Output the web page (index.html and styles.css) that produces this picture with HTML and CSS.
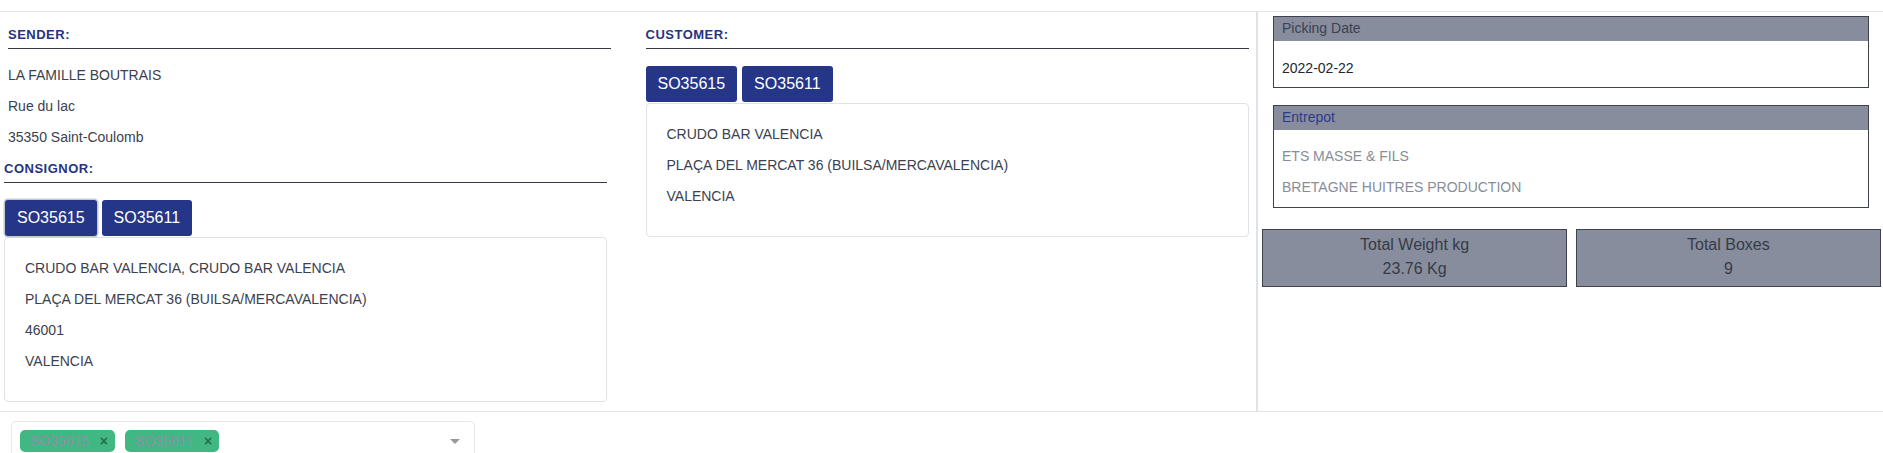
FILE: index.html
```html
<!DOCTYPE html>
<html lang="fr">
<head>
<meta charset="utf-8">
<title>Shipment</title>
<link rel="stylesheet" href="styles.css">
</head>
<body>
<div class="main">
  <div class="left">
    <div class="col col1">
      <div class="sender">
        <h6 class="sec-title">SENDER:</h6>
        <div class="lines">
          <p>LA FAMILLE BOUTRAIS</p>
          <p>Rue du lac</p>
          <p>35350 Saint-Coulomb</p>
        </div>
      </div>
      <h6 class="sec-title">CONSIGNOR:</h6>
      <div class="btns">
        <button class="btn btn-focus">SO35615</button><button class="btn">SO35611</button>
      </div>
      <div class="card">
        <p>CRUDO BAR VALENCIA, CRUDO BAR VALENCIA</p>
        <p>PLAÇA DEL MERCAT 36 (BUILSA/MERCAVALENCIA)</p>
        <p>46001</p>
        <p>VALENCIA</p>
      </div>
    </div>
    <div class="col col2">
      <h6 class="sec-title">CUSTOMER:</h6>
      <div class="btns">
        <button class="btn">SO35615</button><button class="btn">SO35611</button>
      </div>
      <div class="card">
        <p>CRUDO BAR VALENCIA</p>
        <p>PLAÇA DEL MERCAT 36 (BUILSA/MERCAVALENCIA)</p>
        <p>VALENCIA</p>
      </div>
    </div>
  </div>
  <div class="right">
    <div class="box box-date">
      <div class="box-head">Picking Date</div>
      <div class="box-body"><p class="date">2022-02-22</p></div>
    </div>
    <div class="box box-ent">
      <div class="box-head head-blue">Entrepot</div>
      <div class="box-body muted">
        <p>ETS MASSE &amp; FILS</p>
        <p>BRETAGNE HUITRES PRODUCTION</p>
      </div>
    </div>
    <div class="totals">
      <div class="total">
        <div>Total Weight kg</div>
        <div>23.76 Kg</div>
      </div>
      <div class="total">
        <div>Total Boxes</div>
        <div>9</div>
      </div>
    </div>
  </div>
</div>
<div class="multiselect">
  <span class="tag">SO35615<i class="tag-x">×</i></span><span class="tag">SO35611<i class="tag-x">×</i></span>
  <span class="ms-arrow"></span>
</div>
</body>
</html>
```
FILE: styles.css
```css
html, body {
  margin: 0;
  padding: 0;
  background: #ffffff;
}
body {
  padding-top: 11px;
  font-family: "Liberation Sans", Arial, sans-serif;
  font-size: 14px;
  color: #3b4150;
  overflow: hidden;
  height: 442px;
}
p { margin: 0; }

.main {
  display: flex;
  border-top: 1px solid #e3e3e3;
  border-bottom: 1px solid #e3e3e3;
}
.left {
  width: 1256px;
  display: flex;
  flex: none;
}
.col {
  width: 603px;
  flex: none;
  padding-top: 15px;
}
.col1 {
  margin-left: 4px;
  padding-bottom: 9px;
}
.col2 {
  margin-left: 38.5px;
}
.sender {
  margin-left: 4px;
  margin-right: -4px;
}
.sec-title {
  margin: 0;
  font-size: 13px;
  line-height: 15px;
  font-weight: 700;
  letter-spacing: 0.5px;
  color: #27347f;
  padding-bottom: 6px;
  border-bottom: 1px solid #343a40;
}
.lines {
  padding-top: 16px;
  padding-bottom: 14px;
}
.lines p, .card p, .box-body p {
  line-height: 20px;
  margin-bottom: 11px;
}
.lines p:last-child, .box-body p:last-child {
  margin-bottom: 0;
}
.btns {
  display: flex;
  gap: 5px;
  margin-top: 17px;
}
.btn {
  font-family: "Liberation Sans", Arial, sans-serif;
  font-size: 16px;
  line-height: 24px;
  padding: 6px 12px;
  border: 0;
  border-radius: 3px;
  background: #253689;
  color: #ffffff;
}
.btn-focus {
  margin-left: 1px;
  box-shadow: 0 0 0 1.5px #c4c7d0;
}
.card {
  margin-top: 1px;
  border: 1px solid #dfe2e6;
  border-radius: 4px;
  padding: 20px 20px 19px 20px;
}

.right {
  flex: 1;
  border-left: 2px solid #dee1e5;
  padding-top: 4px;
}
.box {
  margin: 0 14px 0 15px;
  border: 1px solid #3d424c;
}
.box-ent {
  margin-top: 17px;
}
.box-head {
  background: #878d9d;
  line-height: 22px;
  padding: 0 8px 2px 8px;
  color: #3b4150;
}
.head-blue {
  color: #2d3a8c;
}
.box-date .box-body {
  padding: 17px 8px 9px 8px;
}
.box-ent .box-body {
  padding: 16px 8px 10px 8px;
}
.date {
  color: #23262d;
}
.muted {
  color: #878d99;
}
.totals {
  margin: 21px 2px 0 4px;
  display: grid;
  grid-template-columns: 1fr 1fr;
  gap: 8.5px;
}
.total {
  background: #878d9d;
  border: 1px solid #3d424c;
  padding: 3px 0 5px 0;
  text-align: center;
  font-size: 16px;
  line-height: 24px;
  color: #363b47;
}

.multiselect {
  position: relative;
  margin: 9px 0 0 10.7px;
  width: 464px;
  box-sizing: border-box;
  min-height: 40px;
  border: 1px solid #e8e8e8;
  border-radius: 5px;
  padding: 8px 40px 0 8px;
}
.tag {
  position: relative;
  display: inline-block;
  padding: 4px 26px 4px 10px;
  margin-right: 10px;
  margin-bottom: 5px;
  border-radius: 5px;
  background: #41b883;
  color: #8b90a5;
  font-size: 14px;
  line-height: 1;
}
.tag-x {
  position: absolute;
  right: 0;
  top: 0;
  bottom: 0;
  width: 22px;
  text-align: center;
  line-height: 22px;
  font-style: normal;
  font-weight: 700;
  font-size: 14px;
  color: #266d4d;
}
.ms-arrow {
  position: absolute;
  right: 14px;
  top: 17px;
  width: 0;
  height: 0;
  border-style: solid;
  border-width: 5px 5px 0 5px;
  border-color: #999999 transparent transparent transparent;
}
```
